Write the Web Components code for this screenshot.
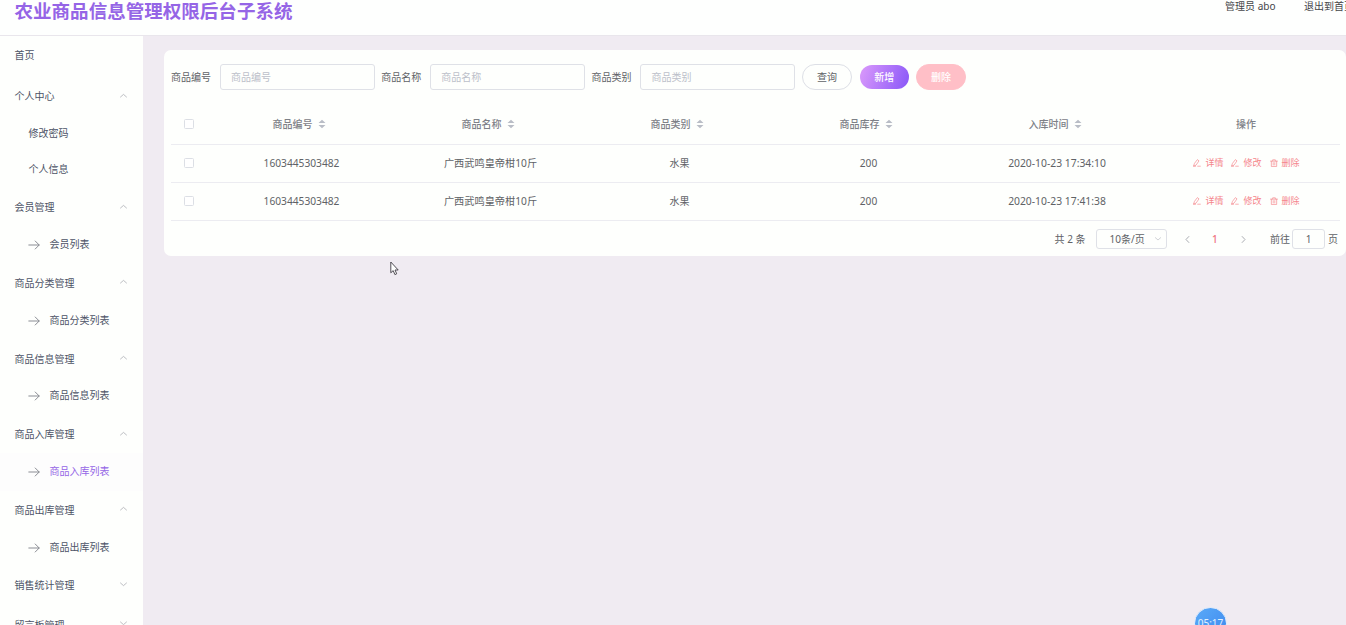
<!DOCTYPE html>
<html lang="zh-CN">
<head>
<meta charset="utf-8">
<title>农业商品信息管理权限后台子系统</title>
<style>
html,body{margin:0;height:100%;overflow:hidden}
body{font:10px/14px "Noto Sans","Noto Sans CJK SC",sans-serif;color:#606266;background:#f0ebf2}
</style>
</head>
<body>
<admin-app></admin-app>
<script>
const define = (name, html) => customElements.define(name, class extends HTMLElement {
  connectedCallback() {
    if (this.shadowRoot) return;
    const root = this.attachShadow({mode: 'open'});
    const t = document.createElement('template');
    t.innerHTML = '<style>*{box-sizing:border-box}:host{box-sizing:border-box}</style>' + (typeof html === 'function' ? html(this) : html);
    root.appendChild(t.content.cloneNode(true));
  }
});

const icons = {
  up: '<path d="M2 8 6 4.5 10 8"/>',
  down: '<path d="M2 4 6 7.5 10 4"/>',
  left: '<path d="M7.8 2 4 6l3.8 4"/>',
  right: '<path d="M4.2 2 8 6l-3.8 4"/>',
  arrow: '<path d="M.8 6h10.4M7.2 2l4 4-4 4"/>',
  edit: '<path d="M1 10.2 2.2 6.6 6.6 .9 9 2.8 4.8 8.8ZM1 10.8h3M7 10.8h4"/>',
  trash: '<path d="M.8 3.2h10.4M4 3V1.2h4V3M2 3.4v7.8h8V3.4M4.8 5.4v3.6M7.2 5.4v3.6"/>'
};
define('ui-icon', el => `<style>:host{display:inline-flex;flex:none;width:9px;height:9px}svg{width:100%;height:100%;display:block;fill:none;stroke:currentColor;stroke-width:var(--stroke,1);stroke-linecap:round;stroke-linejoin:round}</style>
<svg viewBox="0 0 12 12">${icons[el.getAttribute('name')]}</svg>`);

define('app-header', `<style>
:host{display:flex;flex:none;justify-content:space-between;height:36px;background:#fefffe;border-bottom:1px solid #e9e6ec;white-space:nowrap}
h1{margin:0 0 0 14.5px;font-size:18.55px;line-height:22px;color:#9565e6;font-weight:700}
nav{display:flex;gap:28.5px;margin-right:-8px;color:#45464a;line-height:12px}
</style><h1>农业商品信息管理权限后台子系统</h1><nav><span>管理员 abo</span><span>退出到首页</span></nav>`);

define('menu-title', el => `<style>:host{display:flex;align-items:center;justify-content:space-between;height:37.8px;padding:0 15px 0 14.5px;color:#4c5366}
ui-icon{color:#9c9ea5;margin-bottom:2px;--stroke:.9}</style><slot></slot>${el.hasAttribute('icon') ? `<ui-icon name="${el.getAttribute('icon')}"></ui-icon>` : ''}`);

define('menu-item', el => `<style>:host{display:flex;align-items:center;height:37.8px;padding:0 0 2px 28px;color:#4c5366}
:host([plain]){height:36px;padding:0 0 0 28.5px}
:host([active]){color:#9565e6;background:#fdfdfd}
ui-icon{width:12px;height:12px;margin:2px 9.6px 0 0;color:#85878e;--stroke:.95}</style>${el.hasAttribute('plain') ? '' : '<ui-icon name="arrow"></ui-icon>'}<slot></slot>`);

const groups = [['会员管理','会员列表'],['商品分类管理','商品分类列表'],['商品信息管理','商品信息列表'],['商品入库管理','商品入库列表'],['商品出库管理','商品出库列表']];
define('side-menu', `<style>:host{display:block;flex:none;width:143px;background:#fefffd;overflow:hidden}
.home{margin-bottom:3.5px}.personal{margin-bottom:1.4px}</style>
<menu-title class="home">首页</menu-title>
<div class="personal"><menu-title icon="up">个人中心</menu-title><menu-item plain>修改密码</menu-item><menu-item plain>个人信息</menu-item></div>
${groups.map((g, i) => `<menu-title icon="up">${g[0]}</menu-title><menu-item ${i === 3 ? 'active' : ''}>${g[1]}</menu-item>`).join('')}
<menu-title icon="down" style="margin-bottom:1.5px">销售统计管理</menu-title><menu-title icon="down">留言板管理</menu-title>`);

define('search-field', el => `<style>:host{display:flex;align-items:center;gap:8.5px}
.box{width:155px;height:26px;border:1px solid #dfe1e7;border-radius:3px;padding:0 10.5px;line-height:24px;color:#bcc0c9}</style>
<span>${el.getAttribute('label')}</span><div class="box">${el.getAttribute('label')}</div>`);

define('pill-button', `<style>:host{display:flex;align-items:center;justify-content:center;width:50px;height:26px;border:1px solid #dddfe6;border-radius:13px}
:host([kind=add]){width:49px;height:24px;border:0;color:#fff;font-weight:500;background:linear-gradient(110deg,#d797fb 5%,#915df8 90%)}
:host([kind=delete]){border-color:#ffc0c8;background:#ffbfc7;color:#fff;font-weight:500}</style><slot></slot>`);

define('sort-head', `<style>:host{display:flex;align-items:center;gap:5px;padding-right:5px}
svg{width:8px;height:10px;fill:#b9bdc6}</style><slot></slot><svg viewBox="0 0 8 10"><path d="M4 .8 7.5 4h-7ZM4 9.2.5 6h7Z"/></svg>`);

define('check-box', `<style>:host{display:block;width:10px;height:10px;border:1px solid #dcdfe5;border-radius:1.5px;background:#fff}</style>`);

define('row-action', el => `<style>:host{display:flex;align-items:center;gap:4px;font-size:9px;color:#f5858b}ui-icon{width:8px;height:8px;--stroke:1}</style>
<ui-icon name="${el.getAttribute('icon')}"></ui-icon><slot></slot>`);

define('table-row', `<style>:host{display:grid;grid-template-columns:36px repeat(6,189px);height:38px;border-bottom:1px solid #ececf1;align-items:center;justify-items:center;padding-bottom:1px}
:host([head]){height:40px;color:#7d8087;font-weight:500}</style><slot></slot>`);

const row = time => `<table-row><check-box></check-box><span class="num">1603445303482</span><span class="num">广西武鸣皇帝柑10斤</span><span>水果</span><span class="num">200</span><span class="num time">${time}</span>
<div class="ops"><row-action icon="edit">详情</row-action><row-action icon="edit">修改</row-action><row-action icon="trash">删除</row-action></div></table-row>`;
define('stock-table', `<style>:host{display:block;width:1169px;overflow:hidden}
.num{font-size:10.2px}.time{font-size:10.35px;margin-right:1px}.ops{display:flex;gap:8px}.last{margin-right:1px}</style>
<table-row head><check-box></check-box>${['商品编号','商品名称','商品类别','商品库存','入库时间'].map(t => `<sort-head>${t}</sort-head>`).join('')}<span class="last">操作</span></table-row>
${row('2020-10-23 17:34:10')}${row('2020-10-23 17:41:38')}`);

define('page-nav', `<style>:host{display:flex;align-items:center;justify-content:flex-end;height:36px;padding-right:9px}
.select{display:flex;align-items:center;justify-content:space-between;width:71px;height:20px;border:1px solid #dfe1e7;border-radius:3px;padding:0 4px 0 12.5px;margin:0 16px 0 10.5px}
.select ui-icon{width:8px;height:8px;color:#b8bbc3}
.arrow{color:#8f929a}.current{color:#ee727c;width:6px;margin:0 21px 0 20px;font-weight:500}
.jump{width:33px;height:20px;border:1px solid #dfe1e7;border-radius:3px;text-align:center;line-height:18px;margin:0 3px 0 2px}
.go{margin-left:22px}</style><span>共 2 条</span><div class="select"><span>10条/页</span><ui-icon name="down"></ui-icon></div>
<ui-icon class="arrow" name="left"></ui-icon><span class="current">1</span><ui-icon class="arrow" name="right"></ui-icon><span class="go">前往</span><div class="jump">1</div><span>页</span>`);

define('stock-panel', `<style>:host{display:block;width:1182px;height:206px;border-radius:7px;background:#fefffd;padding:14px 0 0 7px}
.tools{display:flex;align-items:center;height:26px;gap:6.8px;margin-bottom:15px}
pill-button[kind=add]{margin-left:1px}pill-button[kind=delete]{margin-left:.5px}
page-nav{width:1176px}</style>
<div class="tools"><search-field label="商品编号"></search-field><search-field label="商品名称"></search-field><search-field label="商品类别"></search-field><pill-button>查询</pill-button><pill-button kind="add">新增</pill-button><pill-button kind="delete">删除</pill-button></div>
<stock-table></stock-table><page-nav></page-nav>`);

define('clock-badge', `<style>:host{position:absolute;left:1194px;top:607px;width:33px;height:33px;border-radius:50%;border:1px solid #dce9fb;background:linear-gradient(135deg,#5aaaf8,#3d88ee);color:#e2f2ff;text-align:center;line-height:31px;font-size:10px}</style>05:17`);
define('mouse-pointer', `<style>:host{position:absolute;left:390px;top:261px;width:9px;height:15px}svg{display:block}</style><svg width="9" height="15" viewBox="0 0 9 15"><path d="M.8 1v10.8l2.4-2.2 1.7 4 1.8-.8L5 9h3.2Z" fill="#fff" stroke="#3e3b43" stroke-width=".9"/></svg>`);

define('admin-app', `<style>:host{display:flex;flex-direction:column;position:relative;width:1346px;height:625px;overflow:hidden}
.body{display:flex;flex:1;min-height:0}main{flex:1;min-width:0;padding:14px 0 0 21px}</style>
<app-header></app-header><div class="body"><side-menu></side-menu><main><stock-panel></stock-panel></main></div>
<clock-badge></clock-badge><mouse-pointer></mouse-pointer>`);
</script>
</body>
</html>
